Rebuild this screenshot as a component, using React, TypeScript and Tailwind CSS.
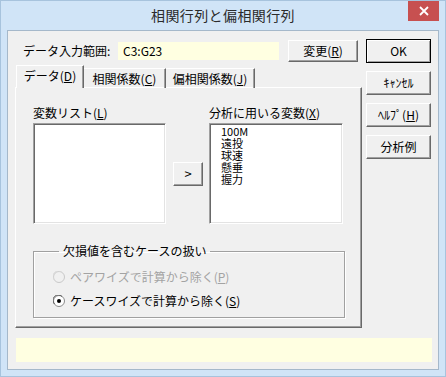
import React from "react";

const FONT = { fontFamily: '"Noto Sans CJK JP", "Noto Sans", sans-serif' };

function U({ c }: { c: string }) {
  return <span className="underline underline-offset-[1px]">{c}</span>;
}

function Btn({
  children,
  className = "",
  def = false,
}: {
  children: React.ReactNode;
  className?: string;
  def?: boolean;
}) {
  return (
    <div
      className={
        "flex items-center justify-center bg-[#f0f0f0] text-[12px] leading-none text-black " +
        (def
          ? "border border-black shadow-[inset_1px_1px_0_#ffffff,inset_-1px_-1px_0_#a0a0a0] "
          : "border border-t-white border-l-white border-r-[#696969] border-b-[#696969] shadow-[inset_-1px_-1px_0_#a0a0a0] ") +
        className
      }
    >
      {children}
    </div>
  );
}

function Radio({ checked, disabled }: { checked?: boolean; disabled?: boolean }) {
  return (
    <svg width="12" height="12" viewBox="0 0 12 12" className="shrink-0">
      <circle cx="6" cy="6" r="5.5" fill={disabled ? "#f0f0f0" : "#ffffff"} stroke={disabled ? "#c8c8c8" : "#8a8a8a"} strokeWidth="1" />
      <path d="M1.5 9 A5 5 0 0 1 9 1.5" fill="none" stroke={disabled ? "#d8d8d8" : "#5a5a5a"} strokeWidth="1" />
      {checked && <circle cx="6" cy="6" r="2" fill="#000000" />}
    </svg>
  );
}

export default function App() {
  return (
    <div
      style={FONT}
      className="w-[446px] h-[377px] bg-[#d0e4f7] border border-[#a7c3dd] flex flex-col"
    >
      {/* title bar */}
      <div className="relative h-[29px] flex items-center justify-center">
        <span className="text-[14px] tracking-[0.4px] text-[#2b2b2b] leading-none -mt-[1px]">
          相関行列と偏相関行列
        </span>
        <div className="absolute right-[6px] top-0 w-[31px] h-[20px] bg-[#c75050] flex items-center justify-center">
          <svg width="10" height="10" viewBox="0 0 10 10">
            <path d="M1 1 L9 9 M9 1 L1 9" stroke="#ffffff" strokeWidth="1.8" />
          </svg>
        </div>
      </div>

      {/* client */}
      <div className="ml-[6px] w-[432px] h-[340px] border border-[#a5b8ca] bg-[#f0f0f0] flex flex-col">
        <div className="flex">
          {/* left */}
          <div className="ml-[7px] w-[347px] flex flex-col pt-[9px]">
            <div className="flex items-center h-[21px]">
              <span className="ml-[8px] w-[95px] text-[12px] leading-none text-black">データ入力範囲:</span>
              <div className="w-[161px] h-[18px] bg-[#ffffe1] flex items-center pl-[5px] text-[12px] leading-none text-black">
                C3:G23
              </div>
              <Btn className="ml-[9px] w-[70px] h-[22px]">
                変更(<U c="R" />)
              </Btn>
            </div>

            {/* tabs */}
            <div className="flex items-end h-[23px] mt-[4px] ml-[1px] relative z-10 -mb-[1px]">
              <div className="w-[68px] h-[23px] bg-[#f0f0f0] border-l border-t border-l-white border-t-white border-r border-r-[#696969] shadow-[inset_-1px_0_0_#a0a0a0] flex items-center justify-center text-[12px] leading-none text-black pb-[2px]">
                データ(<U c="D" />)
              </div>
              <div className="w-[82px] h-[20px] border-t border-t-white border-r border-r-[#696969] shadow-[inset_-1px_0_0_#a0a0a0] flex items-center justify-center text-[12px] leading-none text-black">
                相関係数(<U c="C" />)
              </div>
              <div className="w-[89px] h-[20px] border-t border-t-white border-r border-r-[#696969] shadow-[inset_-1px_0_0_#a0a0a0] flex items-center justify-center text-[12px] leading-none text-black">
                偏相関係数(<U c="J" />)
              </div>
            </div>

            {/* panel */}
            <div className="w-[347px] h-[241px] border border-t-white border-l-white border-r-[#696969] border-b-[#696969] shadow-[inset_-1px_-1px_0_#a0a0a0] flex flex-col pl-[17px] pt-[19px]">
              <div className="flex">
                <div className="flex flex-col w-[133px]">
                  <span className="text-[12px] leading-none h-[16px] text-black">
                    変数リスト(<U c="L" />)
                  </span>
                  <div className="w-[133px] h-[101px] bg-white border border-t-[#a0a0a0] border-l-[#a0a0a0] border-r-white border-b-white shadow-[inset_1px_1px_0_#696969,inset_-1px_-1px_0_#e3e3e3]" />
                </div>
                <div className="w-[30px] ml-[7px] mr-[6px] pt-[55px]">
                  <Btn className="w-[30px] h-[24px]">
                    <span className="text-[13px] -mt-[1px]">&gt;</span>
                  </Btn>
                </div>
                <div className="flex flex-col w-[133px]">
                  <span className="text-[12px] leading-none h-[16px] text-black">
                    分析に用いる変数(<U c="X" />)
                  </span>
                  <div className="w-[134px] h-[101px] bg-white border border-t-[#a0a0a0] border-l-[#a0a0a0] border-r-white border-b-white shadow-[inset_1px_1px_0_#696969,inset_-1px_-1px_0_#e3e3e3] pl-[11px] pt-[1px] flex flex-col text-[11px] leading-[12px] text-black">
                    <span>100M</span>
                    <span>遠投</span>
                    <span>球速</span>
                    <span>懸垂</span>
                    <span>握力</span>
                  </div>
                </div>
              </div>

              <fieldset className="mt-[21px] w-[312px] h-[73px] border border-[#a0a0a0] shadow-[1px_1px_0_#ffffff,inset_1px_1px_0_#ffffff] pl-[19px]">
                <legend className="ml-[6px] px-[4px] text-[12px] leading-none text-black">
                  欠損値を含むケースの扱い
                </legend>
                <div className="flex items-center gap-[5px] mt-[13px] h-[14px]">
                  <Radio disabled />
                  <span className="text-[12px] leading-none text-[#a3a3a3]">
                    ペアワイズで計算から除く(<U c="P" />)
                  </span>
                </div>
                <div className="flex items-center gap-[5px] mt-[10px] h-[14px]">
                  <Radio checked />
                  <span className="text-[12px] leading-none text-black">
                    ケースワイズで計算から除く(<U c="S" />)
                  </span>
                </div>
              </fieldset>
            </div>
          </div>

          {/* right buttons */}
          <div className="ml-[4px] w-[65px] pt-[8px] flex flex-col gap-[8px]">
            <Btn def className="w-[65px] h-[24px]">OK</Btn>
            <Btn className="w-[65px] h-[24px]">ｷｬﾝｾﾙ</Btn>
            <Btn className="w-[65px] h-[24px]">
              ﾍﾙﾌﾟ(<U c="H" />)
            </Btn>
            <Btn className="w-[65px] h-[24px]">分析例</Btn>
          </div>
        </div>

        {/* status bar */}
        <div className="ml-[8px] mt-[10px] w-[416px] h-[24px] bg-[#ffffe1]" />
      </div>
    </div>
  );
}
